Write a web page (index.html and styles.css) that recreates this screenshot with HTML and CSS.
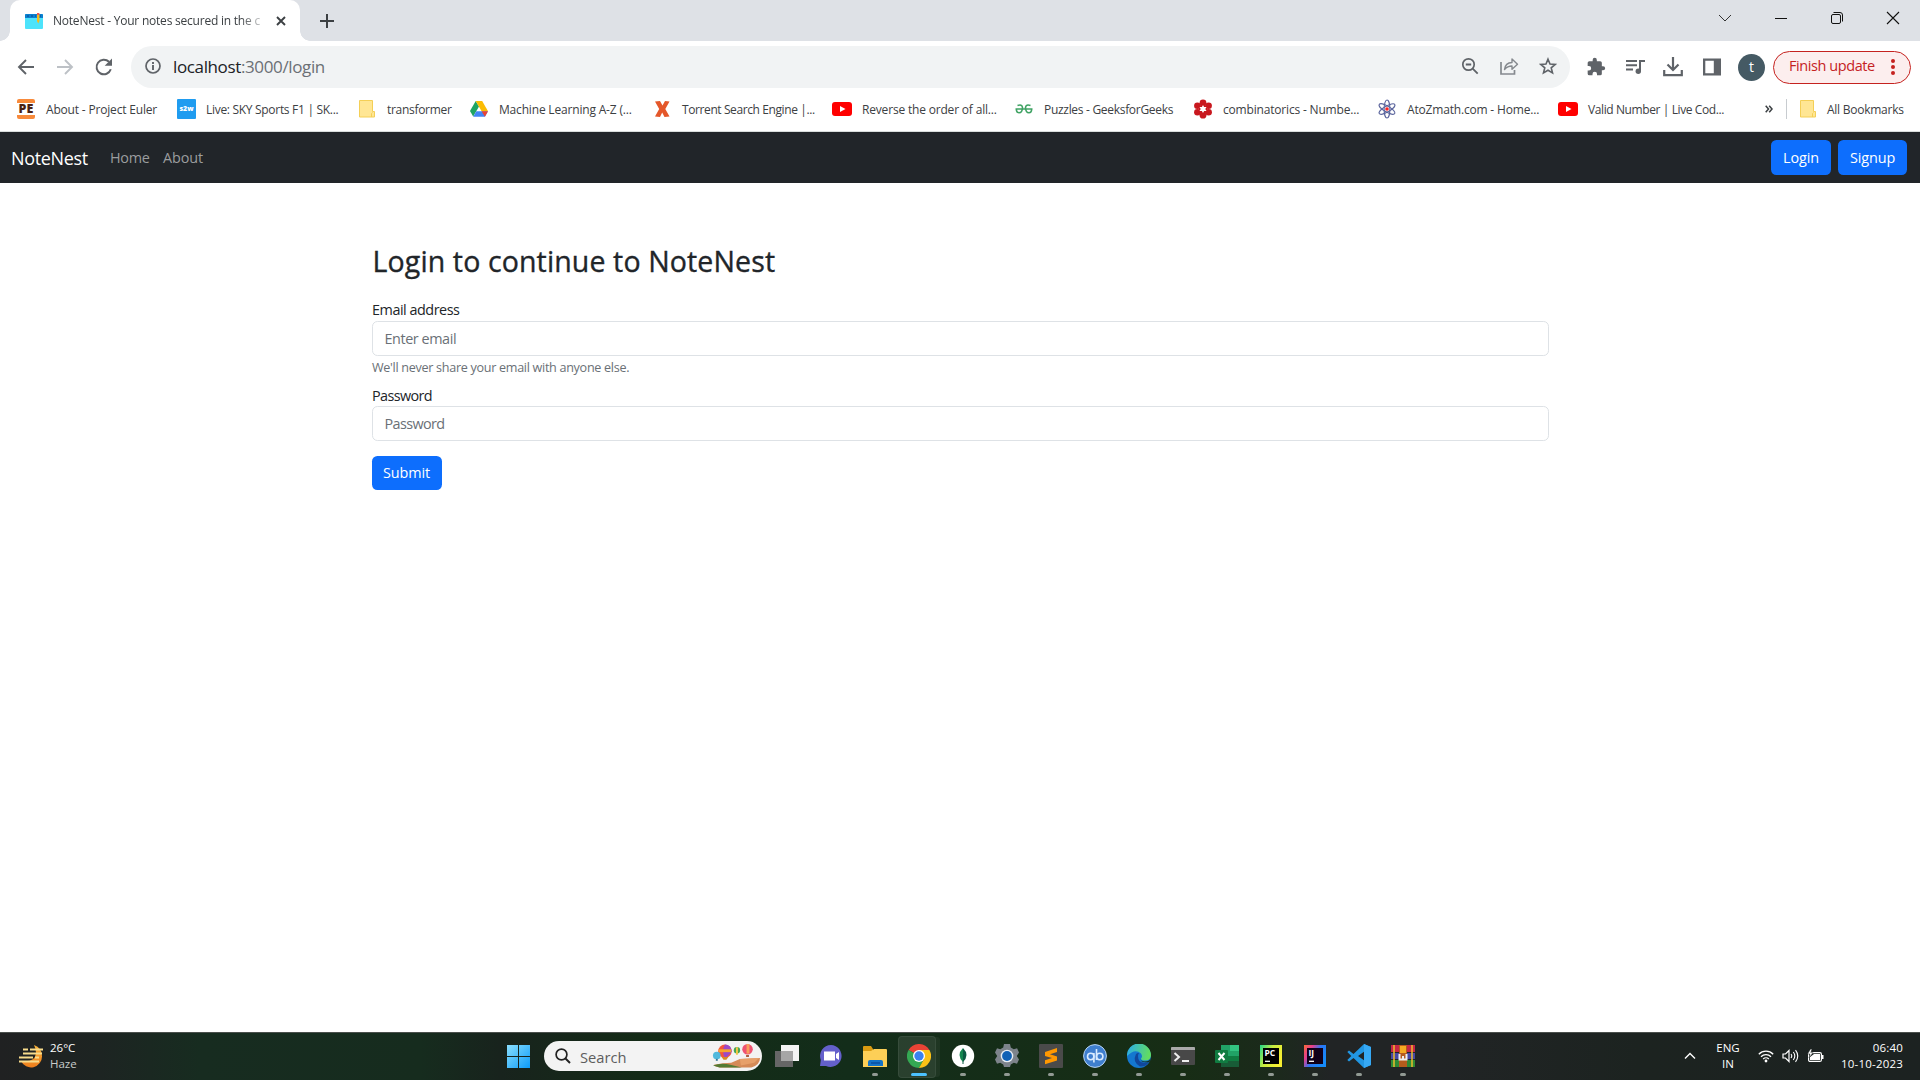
FILE: index.html
```html
<!DOCTYPE html>
<html lang="en">
<head>
<meta charset="utf-8">
<title>NoteNest - Your notes secured in the cloud</title>
<link rel="stylesheet" href="styles.css">
</head>
<body>
<div class="screen">
  <header class="tabstrip">
    <div class="tab">
      <svg class="favicon" width="18" height="16" viewBox="0 0 18 16"><rect width="18" height="15" rx="1" y="1" fill="#4de3fb"/><path d="M0 5V2q0-1 1-1h16q1 0 1 1v3z" fill="#0b7fd0"/><path d="M2 3h2M6 3h2M10 3h1M15 3h1" stroke="#0a4d86"/><path d="M12 1h2.4v7l-1.2 2.5L12 8z" fill="#f9b916"/><path d="M12 0h2.4v2H12z" fill="#ec5b50"/></svg>
      <span class="tab-title">NoteNest - Your notes secured in the c</span>
      <svg class="tab-close" width="10" height="10" viewBox="0 0 10 10"><path d="M1 1l8 8M9 1l-8 8" stroke="#3c4043" stroke-width="1.9"/></svg>
    </div>
    <svg class="new-tab" width="16" height="16" viewBox="0 0 16 16"><path d="M8 1v14M1 8h14" stroke="#3c4043" stroke-width="2"/></svg>
    <div class="window-controls">
      <svg width="14" height="14" viewBox="0 0 14 14"><path d="M1 4l6 6 6-6" fill="none" stroke="#333" stroke-width="1"/></svg>
      <svg width="14" height="14" viewBox="0 0 14 14"><path d="M1 7.5h12" stroke="#111"/></svg>
      <svg width="14" height="14" viewBox="0 0 14 14"><rect x="1.5" y="3.5" width="9" height="9" rx="1.5" fill="none" stroke="#111"/><path d="M3.5 1.5H10q2.500 0 2.500 2.500v6.500" fill="none" stroke="#111"/></svg>
      <svg width="14" height="14" viewBox="0 0 14 14"><path d="M1 1l12 12M13 1L1 13" stroke="#111" stroke-width="1.100"/></svg>
    </div>
  </header>

  <div class="toolbar">
    <div class="nav-icons">
      <svg width="20" height="20" viewBox="0 0 20 20"><path d="M18 10H3.500M10 3l-7 7 7 7" fill="none" stroke="#5f6368" stroke-width="1.900"/></svg>
      <svg width="20" height="20" viewBox="0 0 20 20"><path d="M2 10h14.500M10 3l7 7-7 7" fill="none" stroke="#bdc1c6" stroke-width="1.900"/></svg>
      <svg width="20" height="20" viewBox="0 0 20 20"><path d="M16.800 12.300A7.300 7.300 0 1 1 15 4.800" fill="none" stroke="#5f6368" stroke-width="2"/><path d="M18 1.500v7.300h-7.300z" fill="#5f6368"/></svg>
    </div>
    <div class="omnibox">
      <svg width="16" height="16" viewBox="0 0 16 16"><circle cx="8" cy="8" r="7" fill="none" stroke="#5f6368" stroke-width="1.700"/><path d="M8 7v5M8 4v1.900" stroke="#5f6368" stroke-width="1.900"/></svg>
      <span class="url"><b>localhost</b>:3000/login</span>
      <div class="omni-actions">
        <svg width="18" height="18" viewBox="0 0 18 18"><circle cx="7.500" cy="7.500" r="5.700" fill="none" stroke="#5f6368" stroke-width="1.700"/><path d="M4.800 7.500h5.400M11.700 11.700l5 5" stroke="#5f6368" stroke-width="1.800"/></svg>
        <svg width="20" height="18" viewBox="0 0 20 18"><path d="M2 5v12h13.500v-4" fill="none" stroke="#85898e" stroke-width="1.700"/><path d="M5.500 12.500q.8-6.800 7.500-7V2l5.500 5.200L13 12.300V9q-4.500 0-7.500 3.500z" fill="none" stroke="#85898e" stroke-width="1.400" stroke-linejoin="round"/></svg>
        <svg width="18" height="18" viewBox="0 0 18 18"><path d="M9 2.200l2 4.800 5.200.4-4 3.400 1.300 5.100L9 13.200l-4.500 2.700 1.300-5.100-4-3.400L7 7z" fill="none" stroke="#5f6368" stroke-width="1.600"/></svg>
      </div>
    </div>
    <div class="extensions">
      <svg width="20" height="20" viewBox="0 0 24 24"><path d="M20.500 11H19V7a2 2 0 0 0-2-2h-4V3.500a2.500 2.500 0 0 0-5 0V5H4a2 2 0 0 0-2 2v3.800h1.500a2.700 2.700 0 0 1 0 5.400H2V20a2 2 0 0 0 2 2h3.800v-1.500a2.700 2.700 0 0 1 5.400 0V22H17a2 2 0 0 0 2-2v-4h1.500a2.500 2.500 0 0 0 0-5z" fill="#5f6368"/></svg>
      <svg width="20" height="20" viewBox="0 0 20 20"><path d="M1 4h11M1 8.300h11M1 12.500h7" stroke="#5f6368" stroke-width="1.900"/><path d="M15 14V3.900h5" fill="none" stroke="#5f6368" stroke-width="2"/><circle cx="13.300" cy="14.300" r="2.700" fill="#5f6368"/></svg>
      <svg width="20" height="20" viewBox="0 0 20 20"><path d="M10 0v13M4.500 7.500L10 13l5.500-5.500M1.200 13v5.200h17.600V13" fill="none" stroke="#5f6368" stroke-width="2.200"/></svg>
      <svg width="20" height="20" viewBox="0 0 20 20"><path d="M1 1.500h18v17H1zM3.300 3.800v12.400h8.500V3.800z" fill="#5f6368" fill-rule="evenodd"/></svg>
    </div>
    <span class="avatar">t</span>
    <div class="update"><span>Finish update</span><i class="dots"></i></div>
  </div>

  <nav class="bookmarks">
    <a><svg width="20" height="20" viewBox="0 0 20 20"><path d="M1 4V2q0-2 2-2h14q2 0 2 2v2zM1 16v2q0 2 2 2h14q2 0 2-2v-2z" fill="#f88a3b"/><text class="pe" x="10" y="14.300" text-anchor="middle">PE</text></svg><span>About - Project Euler</span></a>
    <a class="tight"><svg width="20" height="20" viewBox="0 0 20 20"><rect x="1" width="19" height="20" rx="1" fill="#1f9cf0"/><text class="s2w" x="10.500" y="12" text-anchor="middle">s2w</text></svg><span>Live: SKY Sports F1 | SK...</span></a>
    <a class="tight"><svg width="20" height="20" viewBox="0 0 20 20"><path d="M2.500 1.500h13v11h2v5.500h-15z" fill="#ffe694" stroke="#f4cf56"/><path d="M14.500 18v-3.500l1-1" fill="none" stroke="#f4cf56"/></svg><span>transformer</span></a>
    <a><svg width="20" height="18" viewBox="0 0 20 18"><path d="M6.700 1L1 11l3.200 5.500L10 6.600z" fill="#1fa463"/><path d="M6.700 1h6.500L19 11.300h-6.400z" fill="#fbbc04"/><path d="M4.200 16.700L7.300 11.300H19l-3.100 5.400z" fill="#4285f4"/><path d="M12.600 11.300H19l-3.100 5.400z" fill="#ea4335"/></svg><span>Machine Learning A-Z (...</span></a>
    <a class="tighter"><svg width="20" height="18" viewBox="0 0 20 18"><path d="M3 1.500L8 1l2.500 4.500L13 1l4.500.5L13.300 9l4.200 7.500-5 .5-2.300-4.500L8 17l-5-.5L7.200 9z" fill="#e4572a"/></svg><span>Torrent Search Engine |...</span></a>
    <a><svg width="20" height="14" viewBox="0 0 20 14"><rect width="20" height="14" rx="3" fill="#f00"/><path d="M8 4l5.500 3L8 10z" fill="#fff"/></svg><span>Reverse the order of all...</span></a>
    <a class="tight"><svg width="20" height="12" viewBox="0 0 20 12"><path d="M1.500 6h17M3.500 2.500Q8 .8 8.500 4.500 8.300 9.800 5 9.800 2.500 9.800 2.300 6M16.500 2.500Q12 .8 11.500 4.500q.2 5.300 3.500 5.300 2.500 0 2.700-3.800" fill="none" stroke="#3fa263" stroke-width="1.600"/></svg><span>Puzzles - GeeksforGeeks</span></a>
    <a><svg width="20" height="20" viewBox="0 0 20 20"><g fill="#c9181e"><circle cx="10" cy="3.800" r="3.400"/><circle cx="4.400" cy="6.800" r="3.300"/><circle cx="15.600" cy="6.800" r="3.300"/><circle cx="4.400" cy="13.200" r="3.300"/><circle cx="15.600" cy="13.200" r="3.300"/><circle cx="10" cy="16.200" r="3.400"/></g><circle cx="10" cy="10" r="4.500" fill="#c9181e"/><path d="M10 6l1.100 2 2.400.1-1.200 1.900 1.200 1.900-2.400.1-1.100 2-1.100-2-2.400-.1L7.700 10 6.500 8.100 8.900 8z" fill="#fff"/></svg><span>combinatorics - Numbe...</span></a>
    <a><svg width="20" height="20" viewBox="0 0 20 20"><g fill="none" stroke="#5a649c" stroke-width="1.100"><ellipse cx="10" cy="10" rx="2.900" ry="9"/><ellipse cx="10" cy="10" rx="2.900" ry="9" transform="rotate(60 10 10)"/><ellipse cx="10" cy="10" rx="2.900" ry="9" transform="rotate(120 10 10)"/></g><circle cx="10" cy="10" r="1.800" fill="#f22"/></svg><span>AtoZmath.com - Home...</span></a>
    <a class="tighter"><svg width="20" height="14" viewBox="0 0 20 14"><rect width="20" height="14" rx="3" fill="#f00"/><path d="M8 4l5.500 3L8 10z" fill="#fff"/></svg><span>Valid Number | Live Cod...</span></a>
    <svg class="more" width="8" height="8" viewBox="0 0 8 8"><path d="M.7.800L3.500 4 .7 7.200M4.200.8L7 4 4.200 7.200" fill="none" stroke="#3c4043" stroke-width="1.500"/></svg>
    <a class="all"><svg width="20" height="20" viewBox="0 0 20 20"><path d="M3.500 1.500h13v11h2v5.500h-15z" fill="#ffe694" stroke="#f4cf56"/><path d="M15.500 18v-3.500l1-1" fill="none" stroke="#f4cf56"/></svg><span>All Bookmarks</span></a>
  </nav>

  <nav class="navbar">
    <a class="brand">NoteNest</a>
    <a class="nav-link home">Home</a>
    <a class="nav-link">About</a>
    <div class="auth"><a class="btn login">Login</a><a class="btn signup">Signup</a></div>
  </nav>

  <main class="page">
    <form class="login-form">
      <h2>Login to continue to NoteNest</h2>
      <label>Email address</label>
      <div class="field">Enter email</div>
      <small>We'll never share your email with anyone else.</small>
      <label class="pw">Password</label>
      <div class="field pw">Password</div>
      <a class="btn submit">Submit</a>
    </form>
  </main>

  <footer class="taskbar">
    <div class="weather">
      <svg width="24" height="24" viewBox="0 0 24 24"><defs><linearGradient id="moon" x1="0" y1="0" x2="0" y2="1"><stop offset="0" stop-color="#f7b43c"/><stop offset="1" stop-color="#ee7d1c"/></linearGradient></defs><path d="M15 1q8 3 8 11a11 11 0 0 1-21 5q14 2 15-8 0-4-2-8z" fill="url(#moon)"/><path d="M4 5.500h5M11 5.500h13M4 9.500h19M0 13.500h14M16 13.500h4M0 17.500h20" stroke="#f8dc8c" stroke-width="1.800"/></svg>
      <div><span>26°C</span><span class="dim">Haze</span></div>
    </div>
    <div class="dock">
      <span class="slot start"><svg width="23" height="23" viewBox="0 0 23 23"><defs><linearGradient id="win" x1="0" y1="0" x2="1" y2="1"><stop offset="0" stop-color="#8adfff"/><stop offset="1" stop-color="#0c9bf8"/></linearGradient></defs><path d="M0 0h11v11H0zM12 0h11v11H12zM0 12h11v11H0zM12 12h11v11H12z" fill="url(#win)"/></svg></span>
      <div class="search">
        <svg width="16" height="16" viewBox="0 0 16 16"><circle cx="6.500" cy="6.500" r="5.400" fill="none" stroke="#222" stroke-width="1.700"/><path d="M10.500 10.500l4.500 4.500" stroke="#222" stroke-width="2"/></svg>
        <span>Search</span>
        <svg class="balloons" width="48" height="26" viewBox="0 0 50 26"><path d="M2 22q10-2 18-2l9-4 21-1q0 7-9 10H8q-5-1-6-3z" fill="#d58a57"/><path d="M29 16l20-1-5 5-14 3z" fill="#e7a06a"/><path d="M1 23q8-3 18-1l12 3H8z" fill="#527b33"/><circle cx="13.500" cy="8" r="7" fill="#f3553c"/><path d="M13.500 1q-4 7 0 14.500Q20 10 20.500 8 20 1 13.500 1z" fill="#9b49c8"/><path d="M7 6h13v3H7z" fill="#f7a52d"/><path d="M10 14h7l-2 3h-3z" fill="#d98b24"/><circle cx="5" cy="12.500" r="4" fill="#51b9dc"/><path d="M4 16h2v2H4z" fill="#397591"/><circle cx="26" cy="7" r="3.300" fill="#48a654"/><path d="M25 3.800h2v8h-2z" fill="#f3c744"/><circle cx="37" cy="6" r="5.500" fill="#ef5271"/><path d="M36 .5h3v10h-3z" fill="#f8a05c"/><path d="M35.500 12h3v2h-3z" fill="#a85636"/></svg>
      </div>
      <span class="slot"><svg width="24" height="22" viewBox="0 0 24 22"><path d="M6 0h18v16H6z" fill="#f4f4f4"/><path d="M0 6h18v16H0z" fill="#666"/><path d="M6 6h12v10H6z" fill="#a6a6a6"/></svg></span>
      <span class="slot"><svg width="24" height="24" viewBox="0 0 24 24"><path d="M12 1a11 11 0 1 1-5 21H1l.8-6A11 11 0 0 1 12 1z" fill="#6460cb"/><path d="M5 7.500h11v9H5zM17 10l3-2v8l-3-2z" fill="#fff"/></svg></span>
      <span class="slot on"><svg width="24" height="24" viewBox="0 0 24 24"><path d="M0 7V3q0-1 1-1h7l2 3v3H0z" fill="#d99a11"/><path d="M0 7h8l3-2h12q1 0 1 1v17H0z" fill="#fdcf57"/><path d="M5 22v-4q0-2 2-2h11q2 0 2 2v4z" fill="#1473c8"/><path d="M8 19h9" stroke="#0a4ea0" stroke-width="1.500"/></svg></span>
      <span class="slot on active"><svg width="24" height="24" viewBox="0 0 24 24"><path d="M12 12L1.600 6A12 12 0 0 1 22.400 6z" fill="#ea4335"/><path d="M12 12L1.600 6A12 12 0 0 0 12 24l5-9z" fill="#34a853"/><path d="M12 6h10.400A12 12 0 0 1 12 24l5-9z" fill="#fbc116"/><circle cx="12" cy="12" r="6" fill="#fff"/><circle cx="12" cy="12" r="4.700" fill="#3b82f0"/></svg></span>
      <span class="slot on"><svg width="24" height="24" viewBox="0 0 24 24"><circle cx="12" cy="12" r="11.200" fill="#fff"/><path d="M12 4q-7 7 0 14z" fill="#14864f"/><path d="M12 4q7 7 0 14z" fill="#0a5a42"/><path d="M12 17v3" stroke="#0a5a42"/></svg></span>
      <span class="slot on"><svg width="24" height="24" viewBox="0 0 24 24"><path d="M9 0h6l.8 3.500 3 1.700 3.300-1L24 8.500 21.800 12l2.200 3.500-2 4.300-3.200-1-3 1.700L15 23H9l-.8-2.500-3-1.700-3.200 1-2-4.300L2.200 12 0 8.500l2-4.300 3.200 1 3-1.700z" fill="#7d838b"/><circle cx="12" cy="12" r="6.300" fill="#e7edf3"/><circle cx="12" cy="12" r="4.900" fill="#1061b6"/></svg></span>
      <span class="slot on"><svg width="24" height="24" viewBox="0 0 24 24"><rect width="24" height="24" rx="1" fill="#4a4a4a"/><path d="M6 8l12-4v4l-7 2.300 7 2.200v4L6 20.300v-4l7-2.200-7-2.200z" fill="#ff9800"/></svg></span>
      <span class="slot on"><svg width="24" height="24" viewBox="0 0 24 24"><circle cx="12" cy="12" r="11.400" fill="#3f7fcf" stroke="#b9d5f2"/><g fill="none" stroke="#d9ebff" stroke-width="1.600"><circle cx="7.700" cy="12.500" r="3.200"/><path d="M10.900 9v9.500M13.500 5v11"/><circle cx="16.700" cy="12.500" r="3.200"/></g></svg></span>
      <span class="slot on"><svg width="24" height="24" viewBox="0 0 24 24"><defs><linearGradient id="edge" x1="0" y1="0" x2="1" y2=".2"><stop offset="0" stop-color="#28aaf0"/><stop offset="1" stop-color="#61dc61"/></linearGradient></defs><circle cx="12" cy="12" r="12" fill="#1478cf"/><path d="M0 12A12 12 0 0 1 24 11q0 5.500-6 5.500-4 0-4-2 2-2 0-5Q8 4 0 12z" fill="url(#edge)"/><path d="M9 10q-4 8 4 12.500 6 .5 9-4.500-11 3-11-6 0-1.500 1-3-1.500-.5-3 1z" fill="#11479b"/><path d="M24 13q-1 4.500-6 4.500-5 0-4-3-1 5 8.500 3.500z" fill="#14301a"/></svg></span>
      <span class="slot on"><svg width="24" height="18" viewBox="0 0 24 18"><rect width="24" height="18" rx="1" fill="#484848"/><path d="M0 3V1q0-1 1-1h22q1 0 1 1v2z" fill="#aaa"/><path d="M3.500 6l4.500 4-4.500 4M11 14h7" fill="none" stroke="#eee" stroke-width="2"/></svg></span>
      <span class="slot on"><svg width="24" height="22" viewBox="0 0 24 22"><path d="M6 0h18v22H6z" fill="#21a366"/><path d="M15 0h9v6h-9z" fill="#33c481"/><path d="M6 11h18v11H6z" fill="#107c41"/><path d="M6 16h18v6H6z" fill="#185c37"/><rect y="5" width="13" height="13" rx="1" fill="#107c41"/><path d="M3.500 8l6 7M9.500 8l-6 7" stroke="#fff" stroke-width="2"/></svg></span>
      <span class="slot on"><svg width="22" height="22" viewBox="0 0 22 22"><defs><linearGradient id="pc" x1="0" y1="0" x2="1" y2=".5"><stop offset="0" stop-color="#21d789"/><stop offset=".5" stop-color="#c9ec40"/><stop offset="1" stop-color="#f5ee32"/></linearGradient></defs><rect width="22" height="22" fill="url(#pc)"/><path d="M3 3h16v16H3z" fill="#000"/><text class="ide" x="4.500" y="11">PC</text><path d="M5 16.300h5" stroke="#fff" stroke-width="1.300"/></svg></span>
      <span class="slot on"><svg width="22" height="22" viewBox="0 0 22 22"><defs><linearGradient id="ij" x1="0" y1="0" x2="1" y2=".6"><stop offset="0" stop-color="#f96b36"/><stop offset=".3" stop-color="#e83e8c"/><stop offset=".6" stop-color="#2876f5"/><stop offset="1" stop-color="#168bfa"/></linearGradient></defs><rect width="22" height="22" fill="url(#ij)"/><path d="M3 3h16v16H3z" fill="#10001a"/><text class="ide" x="4.500" y="11">IJ</text><path d="M5 16.300h5" stroke="#fff" stroke-width="1.300"/></svg></span>
      <span class="slot on"><svg width="24" height="24" viewBox="0 0 24 24"><path d="M17 0l7 3v18l-7 3L6.500 14 2 17.500.300 16 4.300 12 .3 8 2 6.500 6.500 10zM18 7l-7 5 7 5z" fill="#2196e3" fill-rule="evenodd"/><path d="M17 0l7 3v18l-7 3z" fill="#36a9f5"/></svg></span>
      <span class="slot on"><svg width="24" height="22" viewBox="0 0 24 22"><path d="M0 0h24v7H0z" fill="#c52645"/><path d="M0 8h24v6H0z" fill="#4549a5"/><path d="M0 15h24v7H0z" fill="#2f8a35"/><path d="M3 0v22M21 0v22" stroke="#edba2c" stroke-width="1.500"/><path d="M8 0h8v22H8z" fill="#b65c1d"/><path d="M9 1h6v7H9z" fill="#f5aa22"/><path d="M8.500 9v5.500h7V9M12 11v3" fill="none" stroke="#eee" stroke-width="2"/></svg></span>
    </div>
    <div class="tray">
      <svg class="chev" width="12" height="8" viewBox="0 0 12 8"><path d="M1 6.500l5-5 5 5" fill="none" stroke="#fff" stroke-width="1.400"/></svg>
      <div class="lang"><span>ENG</span><span>IN</span></div>
      <div class="status">
        <svg width="16" height="14" viewBox="0 0 16 14"><path d="M.8 5.200a10.200 10.200 0 0 1 14.400 0M3 7.700a7 7 0 0 1 10 0M5.200 10a4 4 0 0 1 5.600 0" fill="none" stroke="#fff" stroke-width="1.300"/><circle cx="8" cy="12" r="1.400" fill="#fff"/></svg>
        <svg width="17" height="14" viewBox="0 0 17 14"><path d="M1 5h2.500L7 1.500v11L3.500 9H1z" fill="none" stroke="#fff" stroke-width="1.200"/><path d="M9 5q1.500 2 0 4M11.300 3q3 4 0 8M13.500 1.200q4.500 5.800 0 11.600" fill="none" stroke="#fff" stroke-width="1.100"/></svg>
        <svg width="17" height="14" viewBox="0 0 17 14"><rect x="1.600" y="3.600" width="12.800" height="8.800" rx="1.500" fill="none" stroke="#fff" stroke-width="1.200"/><path d="M3 11V8l4-3h6v6zM15 6h1.500v4H15z" fill="#fff"/><path d="M3.500 0L.5 5H3L2 9l4-5.300H3.800L5 0z" fill="#fff" stroke="#1d2221" stroke-width=".5"/></svg>
      </div>
      <div class="clock"><span>06:40</span><span>10-10-2023</span></div>
    </div>
  </footer>
</div>
</body>
</html>
```
FILE: styles.css
```css
* { box-sizing: border-box; }
body { margin: 0; font-family: "Open Sans", "Noto Sans", sans-serif; color: #212529; background: #fff; }
svg { display: block; flex: none; }
.screen { width: 1920px; height: 1080px; display: flex; flex-direction: column; overflow: hidden; }

.tabstrip { height: 41px; flex: none; background: #dee1e6; display: flex; align-items: center; padding-left: 10px; }
.tab { width: 290px; height: 41px; background: #fff; border-radius: 10px 10px 0 0; display: flex; align-items: center; padding: 0 14px 0 15px; position: relative; }
.tab::before, .tab::after { content: ""; position: absolute; bottom: 0; width: 10px; height: 10px; }
.tab::before { left: -10px; background: radial-gradient(circle at 0 0, #dee1e6 9.5px, #fff 10px); }
.tab::after { right: -10px; background: radial-gradient(circle at 100% 0, #dee1e6 9.5px, #fff 10px); }
.tab-title { margin-left: 10px; width: 208px; font-size: 12px; line-height: 20px; letter-spacing: -.22px; color: #3c4043; white-space: nowrap; -webkit-mask-image: linear-gradient(90deg, #000 90%, #0004); mask-image: linear-gradient(90deg, #000 90%, #0004); }
.tab-close { margin-left: auto; }
.new-tab { margin-left: 19px; }
.window-controls { margin-left: auto; display: flex; gap: 42px; padding: 0 20px 5px 0; }

.toolbar { height: 47px; flex: none; display: flex; align-items: center; padding: 5px 9px 0 16px; }
.nav-icons { display: flex; gap: 19px; width: 115px; flex: none; }
.omnibox { width: 1439px; height: 42px; border-radius: 21px; background: #f1f3f4; display: flex; align-items: center; padding: 0 13px 2px 14px; }
.url { margin-left: 12px; font-size: 17px; letter-spacing: -.37px; color: #6b6f74; white-space: nowrap; }
.url b { font-weight: 400; color: #202124; }
.omni-actions { margin-left: auto; display: flex; gap: 20px; }
.extensions { display: flex; gap: 18.7px; margin-left: 16px; }
.avatar { width: 27px; height: 27px; margin-left: 16px; border-radius: 50%; background: #455a64; color: #fff; font-size: 14px; line-height: 26px; text-align: center; }
.update { width: 138px; height: 33px; margin-left: auto; border: 1px solid #c5221f; border-radius: 17px; background: #fceeee; color: #c5221f; font-size: 14.5px; letter-spacing: -.42px; display: flex; align-items: center; padding: 0 15px 3px 15px; white-space: nowrap; }
.dots { width: 4px; height: 4px; margin: 3px 0 0 auto; border-radius: 50%; background: #c5221f; box-shadow: 0 -6px #c5221f, 0 6px #c5221f; }

.bookmarks { height: 44px; flex: none; border-bottom: 1px solid #d9dddc; padding: 0 0 1px 16px; display: grid; grid-template-columns: 160px 181px 112px 183px 180px 182px 179px 184px 181px 207px 21px 134px; align-items: center; font-size: 12px; letter-spacing: -.18px; color: #3c4043; }
.bookmarks a { display: flex; align-items: center; gap: 10px; white-space: nowrap; }
.bookmarks .tight { letter-spacing: -.3px; }
.bookmarks .tighter { letter-spacing: -.4px; }
.bookmarks .all { border-left: 1px solid #c8ccd0; height: 20px; padding-left: 10px; letter-spacing: -.25px; }
.pe { font: 900 12.5px "Open Sans", sans-serif; fill: #4a1f12; letter-spacing: 0; }
.s2w { font: 800 7px "Open Sans", sans-serif; fill: #fff; letter-spacing: 0; }

.navbar { height: 51px; flex: none; background: #212529; display: flex; align-items: center; padding: 0 13px 0 11px; }
.brand { font-size: 18px; letter-spacing: -.34px; color: #fff; width: 99px; padding-top: 1px; }
.nav-link { font-size: 14.4px; letter-spacing: -.1px; color: #9b9d9e; }
.home { width: 53px; letter-spacing: -.3px; }
.auth { margin-left: auto; display: flex; gap: 7px; }
.btn { display: flex; align-items: center; justify-content: center; height: 35px; border-radius: 5.4px; background: #0d6efd; color: #fff; font-size: 14.4px; letter-spacing: -.1px; padding-bottom: 1px; }
.login { width: 60px; }
.signup { width: 69px; }

.page { flex: 1; padding-top: 57px; }
.login-form { width: 1177px; margin: 0 auto; display: flex; flex-direction: column; align-items: flex-start; }
h2 { margin: 0 0 18px 1px; font-size: 28.5px; line-height: 42px; font-weight: 500; letter-spacing: .13px; -webkit-text-stroke: .35px #212529; }
label { font-size: 14.4px; line-height: 20px; margin: 0 0 1px .5px; letter-spacing: -.47px; }
.field { width: 100%; height: 35px; border: 1px solid #dee2e6; border-radius: 5.4px; font-size: 14.4px; line-height: 33px; padding-left: 12px; color: #6a7076; letter-spacing: -.43px; }
small { font-size: 12.6px; line-height: 20px; margin: 2px 0 8px .5px; color: #6a7076; letter-spacing: -.3px; }
.pw { letter-spacing: -.62px; }
label.pw { margin-bottom: 0; }
.submit { width: 70px; height: 34px; margin-top: 15px; }

.taskbar { height: 48px; flex: none; border-top: 1px solid #4a4f4c; display: flex; background: linear-gradient(90deg, #202122 0, #1d2422 100px, #172c20 200px, #162c1e 420px, #18231d 500px, #142b17 640px, #132d1a 850px, #172d15 1180px, #1b2a1b 1270px, #212425 1330px, #212425 1440px, #1c2320 1640px, #1c2221 1920px); color: #fff; font-size: 11.5px; }
.weather { width: 496px; padding: 0 0 1px 19px; display: flex; align-items: center; gap: 7px; line-height: 16px; }
.weather div, .lang, .clock { display: flex; flex-direction: column; }
.dim { color: #c8cccb; }
.dock { display: flex; align-items: center; }
.slot { width: 44px; height: 47px; display: flex; align-items: center; justify-content: center; position: relative; padding-bottom: 1px; }
.start { margin-right: 4px; }
.on::after { content: ""; position: absolute; left: 19px; bottom: 4px; width: 6px; height: 3px; border-radius: 2px; background: #929a94; }
.active::before { content: ""; position: absolute; left: 1px; top: 3px; width: 36px; height: 40px; border-radius: 4px; background: #ffffff18; border: 1px solid #ffffff10; box-shadow: 5px 0 0 -1px #ffffff0c; }
.active svg { position: relative; }
.active::after { left: 14px; width: 16px; background: #4cc2ff; }
.search { width: 218px; height: 30px; border-radius: 15px; background: #f3f3f3; margin: 0 3px 1px 0; display: flex; align-items: center; padding: 0 2px 0 11px; color: #5d5d5d; font-size: 14.7px; }
.search span { margin: 2px 0 0 9px; }
.balloons { margin-left: auto; }
.tray { margin-left: auto; display: flex; align-items: center; line-height: 16px; padding: 0 17px 1px 0; }
.lang { width: 24px; margin-left: 20px; align-items: center; }
.status { display: flex; gap: 8px; margin-left: 18px; }
.clock { width: 64px; margin-left: 15px; align-items: flex-end; letter-spacing: .2px; }
.ide { font: 700 8.5px "Open Sans", sans-serif; fill: #fff; }
```
